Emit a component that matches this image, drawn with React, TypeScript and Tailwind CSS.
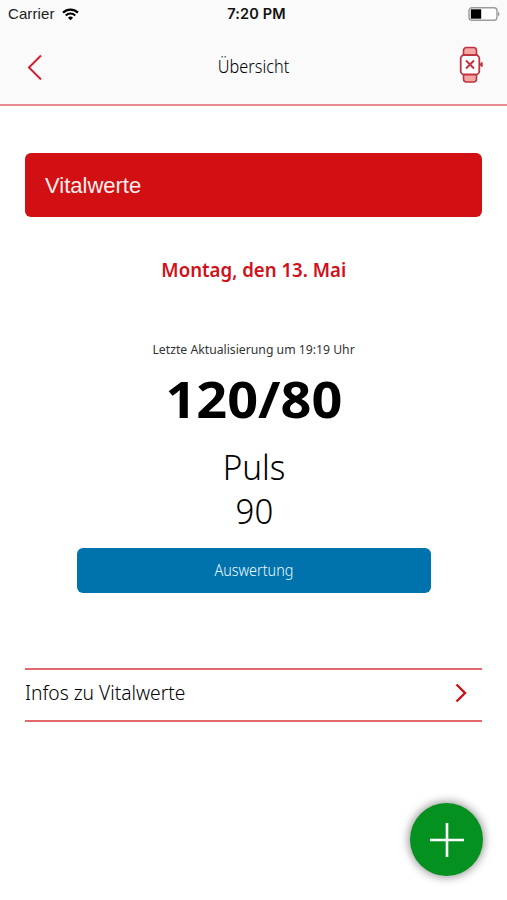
function StatusBar() {
  return (
    <div className="relative flex h-7 items-center justify-between pl-2 pr-[7px] font-['Liberation_Sans','Arial',sans-serif] text-black">
      <div className="flex items-center gap-[7px]">
        <span className="text-[15px] tracking-[0.1px] text-[#222]">Carrier</span>
        <svg width="17" height="13" viewBox="0 0 17 13" fill="none" aria-hidden="true">
          <path d="M1 4.6a10.8 10.8 0 0 1 15 0" stroke="#000" strokeWidth="2.2" />
          <path d="M3.7 7.5a6.9 6.9 0 0 1 9.6 0" stroke="#000" strokeWidth="2" />
          <path d="M8.5 12.3 5.9 9.7a3.8 3.8 0 0 1 5.2 0Z" fill="#000" />
        </svg>
      </div>
      <span className="absolute left-1/2 -translate-x-1/2 whitespace-nowrap pl-[6px] font-['Inter',sans-serif] text-[14.5px] font-semibold tracking-[0.15px] text-[#111]">
        7:20 PM
      </span>
      <svg width="32" height="14" viewBox="0 0 32 14" fill="none" aria-hidden="true">
        <rect x="1" y=".8" width="28" height="12.4" rx="3" fill="#fff" stroke="#9b9b9b" strokeWidth="1.4" />
        <rect x="2.8" y="2.3" width="10.4" height="9.4" fill="#000" />
        <path d="M30 4.8c2 .8 2 3.6 0 4.4Z" fill="#9b9b9b" />
      </svg>
    </div>
  );
}

function WatchIcon() {
  return (
    <svg width="25" height="38" viewBox="0 0 25 38" fill="none" stroke="#bf3440" aria-hidden="true">
      <path d="M4.5 9V4.5a3 3 0 0 1 3-3h7a3 3 0 0 1 3 3V9Z" fill="#f5a7a3" strokeWidth="1.6" />
      <path d="M4.5 28v5a3 3 0 0 0 3 3h7a3 3 0 0 0 3-3v-5Z" fill="#f5a7a3" strokeWidth="1.6" />
      <rect x="1.7" y="9" width="18.6" height="19.5" rx="3.5" fill="#fff" strokeWidth="1.8" />
      <path d="m7 14.5 8 8m0-8-8 8" strokeWidth="2" />
      <path d="M20 18.5h2M22.7 16.2v4.6" strokeWidth="2" />
    </svg>
  );
}

function Header() {
  return (
    <header className="h-[106px] border-b-2 border-b-[#e68a94] bg-[#fafafa]">
      <StatusBar />
      <div className="flex h-[74px] items-center justify-between pl-[27px] pr-[23px]">
        <button aria-label="Zurück" className="mt-1 w-[25px]">
          <svg width="16" height="26" viewBox="0 0 16 26" fill="none" aria-hidden="true">
            <path d="M14 1.5 2 13.5l12 12" stroke="#cf2032" strokeWidth="2" />
          </svg>
        </button>
        <h1 className="-translate-x-[2px] scale-x-[0.88] pt-[2px] text-[18.5px] font-light text-black">Übersicht</h1>
        <WatchIcon />
      </div>
    </header>
  );
}

export default function App() {
  return (
    <div className="relative flex h-[900px] w-[507px] flex-col overflow-hidden bg-white font-['Noto_Sans',sans-serif] text-black">
      <Header />

      <main className="flex flex-col px-[25px] pt-[47px]">
        <div className="flex h-[64px] items-center rounded-[6px] bg-[#d20f12] pl-5 font-['Liberation_Sans','Arial',sans-serif] text-[22px] text-[#ffeeee]">
          Vitalwerte
        </div>

        <section className="flex flex-col items-center whitespace-nowrap text-center">
          <h2 className="mt-[39px] scale-x-[0.955] text-[19.5px] font-semibold leading-[28px] text-[#d0101a]">
            Montag, den 13. Mai
          </h2>
          <p className="mt-[55px] scale-x-[0.94] text-[13px] leading-[20px] text-[#333]">
            Letzte Aktualisierung um 19:19 Uhr
          </p>
          <p className="mt-[10px] scale-x-[1.08] text-[50px] font-bold leading-[60px]">120/80</p>
          <p className="mt-[16px] translate-x-px scale-x-[0.95] text-[35px] font-light leading-[44px]">Puls</p>
          <p className="translate-x-px scale-x-[0.97] text-[34px] font-light leading-[44px]">90</p>
          <button className="mt-[15px] h-[45px] w-[354px] rounded-[6px] bg-[#0073ac] pb-[2px] text-[16px] font-light text-[#edf8ff]">
            <span className="inline-block scale-x-[0.9]">Auswertung</span>
          </button>
        </section>

        <button className="mt-[75px] flex h-[54px] items-center justify-between border-y-2 border-y-[#e2686c] pb-[4px] pr-[15px]">
          <span className="-mt-px origin-left scale-x-[0.985] text-[19.5px] font-light text-black">
            Infos zu Vitalwerte
          </span>
          <svg width="12" height="20" viewBox="0 0 12 20" fill="none" aria-hidden="true">
            <path d="m1.5 1.5 8.5 8.5-8.5 8.5" stroke="#cc1018" strokeWidth="2.4" />
          </svg>
        </button>
      </main>

      <button
        aria-label="Hinzufügen"
        className="absolute bottom-[24px] right-[24px] flex size-[73px] items-center justify-center rounded-full bg-[#05911f] shadow-[0_0_10px_1px_rgba(0,0,0,0.45)]"
      >
        <svg width="34" height="34" viewBox="0 0 34 34" fill="none" aria-hidden="true">
          <path d="M17 0v34M0 17h34" stroke="#fff" strokeWidth="2.6" />
        </svg>
      </button>
    </div>
  );
}
